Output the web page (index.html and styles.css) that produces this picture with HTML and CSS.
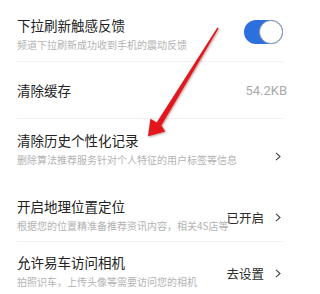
FILE: index.html
```html
<!DOCTYPE html>
<html lang="zh">
<head>
<meta charset="utf-8">
<link rel="stylesheet" href="styles.css">
</head>
<body>
<div class="list">
  <div class="item item-first">
    <div class="text">
      <div class="title">下拉刷新触感反馈</div>
      <div class="sub">频道下拉刷新成功收到手机的震动反馈</div>
    </div>
    <div class="toggle"><span class="knob"></span></div>
  </div>
  <div class="item item-plain">
    <div class="text">
      <div class="title">清除缓存</div>
    </div>
    <div class="size">54.2KB</div>
  </div>
  <div class="item item-tall item-noline">
    <div class="text">
      <div class="title">清除历史个性化记录</div>
      <div class="sub">删除算法推荐服务针对个人特征的用户标签等信息</div>
    </div>
    <div class="action">
      <svg class="chev" width="6" height="9" viewBox="0 0 6 9"><path d="M1 0.8 L5 4.5 L1 8.2" fill="none" stroke="#444" stroke-width="1.1"/></svg>
    </div>
  </div>
  <div class="item">
    <div class="text">
      <div class="title">开启地理位置定位</div>
      <div class="sub">根据您的位置精准备推荐资讯内容，相关4S店等</div>
    </div>
    <div class="action">
      <span class="value">已开启</span>
      <svg class="chev" width="6" height="9" viewBox="0 0 6 9"><path d="M1 0.8 L5 4.5 L1 8.2" fill="none" stroke="#444" stroke-width="1.1"/></svg>
    </div>
  </div>
  <div class="item item-noline">
    <div class="text">
      <div class="title">允许易车访问相机</div>
      <div class="sub">拍照识车，上传头像等需要访问您的相机</div>
    </div>
    <div class="action">
      <span class="value">去设置</span>
      <svg class="chev" width="6" height="9" viewBox="0 0 6 9"><path d="M1 0.8 L5 4.5 L1 8.2" fill="none" stroke="#444" stroke-width="1.1"/></svg>
    </div>
  </div>
</div>
<svg class="arrow" width="300" height="294" viewBox="0 0 300 294">
  <defs>
    <filter id="sh" x="-20%" y="-20%" width="140%" height="140%">
      <feDropShadow dx="0.8" dy="0.8" stdDeviation="0.8" flood-color="#400" flood-opacity="0.45"/>
    </filter>
  </defs>
  <polygon filter="url(#sh)" fill="#e4141b" points="217.4,27.6 218.6,28.4 161.3,125.5 165.2,131.6 148,136.2 150.4,118.8 156.7,122.5"/>
</svg>
</body>
</html>
```

FILE: styles.css
```css
html, body {
  margin: 0;
  padding: 0;
  background: #ffffff;
}
body {
  width: 300px;
  height: 294px;
  overflow: hidden;
  position: relative;
  font-family: "Noto Sans CJK SC", "Noto Sans", sans-serif;
}
.list {
  display: flex;
  flex-direction: column;
}
.item {
  box-sizing: border-box;
  display: flex;
  align-items: center;
  flex-shrink: 0;
  height: 56px;
  margin: 0 17px;
  padding-top: 11px;
  border-bottom: 1px solid #f1f1f1;
}
.item-first {
  height: 62px;
  padding-top: 16px;
}
.item-plain {
  height: 57px;
  padding-top: 0;
}
.item-tall {
  height: 67px;
  padding-top: 12px;
}
.item-noline {
  border-bottom-color: transparent;
}
.text {
  flex: 1;
  min-width: 0;
  display: flex;
  flex-direction: column;
  gap: 4px;
  align-self: flex-start;
}
.item-plain .text {
  align-self: center;
}
.title {
  font-size: 13.5px;
  line-height: 18px;
  color: #222222;
  white-space: nowrap;
}
.sub {
  font-size: 10px;
  line-height: 14px;
  color: #b3b3b3;
  white-space: nowrap;
}
.toggle {
  align-self: flex-start;
  margin-top: 4px;
  width: 39px;
  height: 24px;
  border-radius: 12px;
  background: #2d6fdd;
  display: flex;
  justify-content: flex-end;
  align-items: center;
}
.knob {
  width: 22px;
  height: 22px;
  border-radius: 50%;
  background: #ffffff;
  border: 1px solid #8c9bb0;
}
.size {
  font-family: Roboto, "Noto Sans", sans-serif;
  font-size: 13px;
  color: #a9a9a9;
  margin-right: -4px;
}
.action {
  display: flex;
  align-items: center;
  gap: 11px;
  margin-right: 2px;
  margin-top: -4px;
}
.value {
  font-size: 12.5px;
  color: #2a2a2a;
}
.chev {
  display: block;
}
.arrow {
  position: absolute;
  left: 0;
  top: 0;
  pointer-events: none;
}
```
